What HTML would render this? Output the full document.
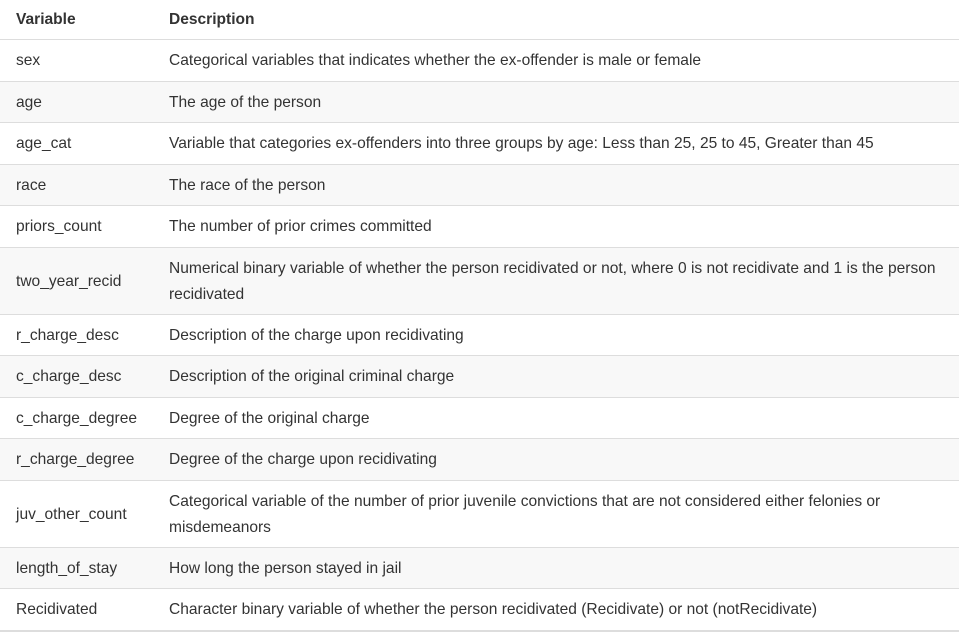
<!DOCTYPE html>
<html><head><style>
html,body{margin:0;padding:0;background:#fff;}
body{width:959px;height:641px;overflow:hidden;font-family:"Liberation Sans",Arial,sans-serif;font-size:15.55px;color:#333;}
table{border-collapse:collapse;width:959px;table-layout:fixed;}
td,th{padding:2px 8px 0 16px;text-align:left;vertical-align:middle;line-height:26px;border-top:1px solid #ddd;white-space:nowrap;}
td.d{white-space:normal;padding-left:0;}
th.d{padding-left:0;}
th{font-weight:bold;height:38px;padding-top:1px;border-top:none;border-bottom:1px solid #ddd;}
td{height:38.5px;}
tr.e td{background:#f8f8f8;}
tr.t td{height:64px;}
tr.last td{border-bottom:2px solid #ddd;}
</style></head><body>
<table>
<colgroup><col style="width:169px"><col></colgroup>
<tr><th>Variable</th><th class="d">Description</th></tr>
<tr><td>sex</td><td class="d">Categorical variables that indicates whether the ex-offender is male or female</td></tr>
<tr class="e"><td>age</td><td class="d">The age of the person</td></tr>
<tr><td>age_cat</td><td class="d">Variable that categories ex-offenders into three groups by age: Less than 25, 25 to 45, Greater than 45</td></tr>
<tr class="e"><td>race</td><td class="d">The race of the person</td></tr>
<tr><td>priors_count</td><td class="d">The number of prior crimes committed</td></tr>
<tr class="e t"><td>two_year_recid</td><td class="d">Numerical binary variable of whether the person recidivated or not, where 0 is not recidivate and 1 is the person recidivated</td></tr>
<tr><td>r_charge_desc</td><td class="d">Description of the charge upon recidivating</td></tr>
<tr class="e"><td>c_charge_desc</td><td class="d">Description of the original criminal charge</td></tr>
<tr><td>c_charge_degree</td><td class="d">Degree of the original charge</td></tr>
<tr class="e"><td>r_charge_degree</td><td class="d">Degree of the charge upon recidivating</td></tr>
<tr class="t"><td>juv_other_count</td><td class="d">Categorical variable of the number of prior juvenile convictions that are not considered either felonies or misdemeanors</td></tr>
<tr class="e"><td>length_of_stay</td><td class="d">How long the person stayed in jail</td></tr>
<tr class="last"><td>Recidivated</td><td class="d">Character binary variable of whether the person recidivated (Recidivate) or not (notRecidivate)</td></tr>
</table>
</body></html>
